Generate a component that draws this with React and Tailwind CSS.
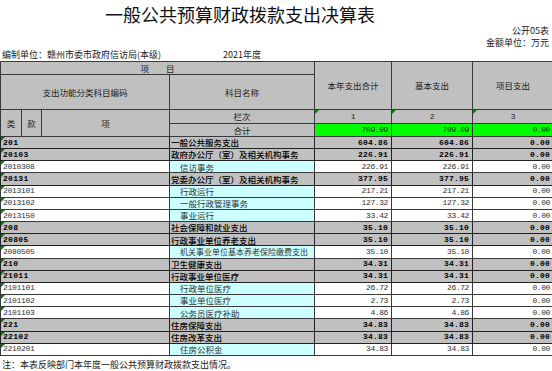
import React from 'react';

const rows = [
  { code: '201', name: '一般公共服务支出', a: '604.86', b: '604.86', c: '0.00', bold: true },
  { code: '20103', name: '政府办公厅（室）及相关机构事务', a: '226.91', b: '226.91', c: '0.00', bold: true },
  { code: '2010308', name: '信访事务', a: '226.91', b: '226.91', c: '0.00' },
  { code: '20131', name: '党委办公厅（室）及相关机构事务', a: '377.95', b: '377.95', c: '0.00', bold: true },
  { code: '2013101', name: '行政运行', a: '217.21', b: '217.21', c: '0.00' },
  { code: '2013102', name: '一般行政管理事务', a: '127.32', b: '127.32', c: '0.00' },
  { code: '2013150', name: '事业运行', a: '33.42', b: '33.42', c: '0.00' },
  { code: '208', name: '社会保障和就业支出', a: '35.10', b: '35.10', c: '0.00', bold: true },
  { code: '20805', name: '行政事业单位养老支出', a: '35.10', b: '35.10', c: '0.00', bold: true },
  { code: '2080505', name: '机关事业单位基本养老保险缴费支出', a: '35.10', b: '35.10', c: '0.00' },
  { code: '210', name: '卫生健康支出', a: '34.31', b: '34.31', c: '0.00', bold: true },
  { code: '21011', name: '行政事业单位医疗', a: '34.31', b: '34.31', c: '0.00', bold: true },
  { code: '2101101', name: '行政单位医疗', a: '26.72', b: '26.72', c: '0.00' },
  { code: '2101102', name: '事业单位医疗', a: '2.73', b: '2.73', c: '0.00' },
  { code: '2101103', name: '公务员医疗补助', a: '4.86', b: '4.86', c: '0.00' },
  { code: '221', name: '住房保障支出', a: '34.83', b: '34.83', c: '0.00', bold: true },
  { code: '22102', name: '住房改革支出', a: '34.83', b: '34.83', c: '0.00', bold: true },
  { code: '2210201', name: '住房公积金', a: '34.83', b: '34.83', c: '0.00' },
];

const cjk = "font-['Noto_Sans_CJK_SC',sans-serif]";
const mono = "font-['Liberation_Mono','Noto_Sans_CJK_SC',monospace]";

const Flag = () => (
  <span className="absolute left-0 top-0 w-0 h-0 border-t-[4px] border-r-[4px] border-t-[#008000] border-r-transparent" />
);

const App = () => {
  const cell = 'border border-[#3a3a3a] p-0 overflow-hidden';
  const numText = `${mono} text-[8px] tracking-[-0.4px]`;
  return (
    <div className={`w-[552px] h-[371px] bg-white overflow-hidden text-black ${cjk}`}>
      <div className="h-[25px] w-[480px] flex items-center justify-center pt-[3px]">
        <h1 className="text-[18px] leading-none font-normal text-[#111]">一般公共预算财政拨款支出决算表</h1>
      </div>
      <div className="h-[12px] text-right pr-[3px] text-[9px] leading-[12px] text-[#222]">公开05表</div>
      <div className="h-[11px] text-right pr-[3px] text-[9px] leading-[11px] text-[#222]">金额单位：万元</div>
      <div className="h-[13px] flex items-center pl-[2px] text-[9px] leading-[13px] text-[#222]">
        <span className="w-[221px]">编制单位：赣州市委市政府信访局(本级)</span>
        <span>2021年度</span>
      </div>
      <table className="table-fixed border-collapse w-[553px] text-[8.5px] leading-none">
        <colgroup>
          <col className="w-[21px]" />
          <col className="w-[20px]" />
          <col className="w-[128px]" />
          <col className="w-[145px]" />
          <col className="w-[77px]" />
          <col className="w-[81px]" />
          <col className="w-[81px]" />
        </colgroup>
        <thead className="bg-[#c0c0c0] text-[#222]">
          <tr>
            <td colSpan={4} className={`${cell} h-[13px] text-center`}>项　　目</td>
            <td rowSpan={2} className={`${cell} text-center`}>本年支出合计</td>
            <td rowSpan={2} className={`${cell} text-center`}>基本支出</td>
            <td rowSpan={2} className={`${cell} text-center`}>项目支出</td>
          </tr>
          <tr>
            <td colSpan={3} className={`${cell} h-[35px] text-center`}>支出功能分类科目编码</td>
            <td className={`${cell} text-center`}>科目名称</td>
          </tr>
          <tr>
            <td rowSpan={2} className={`${cell} text-center`}>类</td>
            <td rowSpan={2} className={`${cell} text-center`}>款</td>
            <td rowSpan={2} className={`${cell} text-center`}>项</td>
            <td className={`${cell} h-[14px] text-center`}>栏次</td>
            <td className={`${cell} relative text-center ${numText}`}><Flag />1</td>
            <td className={`${cell} relative text-center ${numText}`}><Flag />2</td>
            <td className={`${cell} relative text-center ${numText}`}><Flag />3</td>
          </tr>
          <tr>
            <td className={`${cell} h-[13px] text-center`}>合计</td>
            <td className={`${cell} border-t-[#8a3a8a] bg-[#00ff00] text-right pr-[3px] ${numText}`}>709.09</td>
            <td className={`${cell} border-t-[#8a3a8a] bg-[#00ff00] text-right pr-[3px] ${numText}`}>709.09</td>
            <td className={`${cell} border-t-[#8a3a8a] bg-[#00ff00] text-right pr-[3px] ${numText}`}>0.00</td>
          </tr>
        </thead>
        <tbody>
          {rows.map((r) => {
            const rowBg = r.bold ? 'bg-[#c0c0c0] text-black' : 'bg-white text-[#333]';
            const line = r.bold ? 'border-[#222]' : '';
            const num = `${cell} ${line} text-right pr-[3px] ${mono} text-[8px] ${r.bold ? 'font-bold tracking-[0.2px]' : 'tracking-[-0.4px]'}`;
            return (
              <tr key={r.code} className={rowBg}>
                <td colSpan={3} className={`${cell} ${line} h-[12.17px] relative pl-[2px] ${mono} text-[8px] ${r.bold ? 'font-bold tracking-[0.3px]' : 'tracking-[-0.3px]'}`}>
                  <Flag />
                  {r.code}
                </td>
                <td className={`${cell} ${line} whitespace-nowrap ${r.bold ? 'pl-[1px] font-medium' : 'bg-[#ccffff] pl-[10px]'} ${r.name.length > 14 && !r.bold ? 'text-[8px]' : ''}`}>
                  {r.name}
                </td>
                <td className={num}>{r.a}</td>
                <td className={num}>{r.b}</td>
                <td className={num}>{r.c}</td>
              </tr>
            );
          })}
        </tbody>
      </table>
      <div className="pl-[2px] pt-[4px] text-[9px] leading-[10px] text-[#222]">注：本表反映部门本年度一般公共预算财政拨款支出情况。</div>
    </div>
  );
};

export default App;
